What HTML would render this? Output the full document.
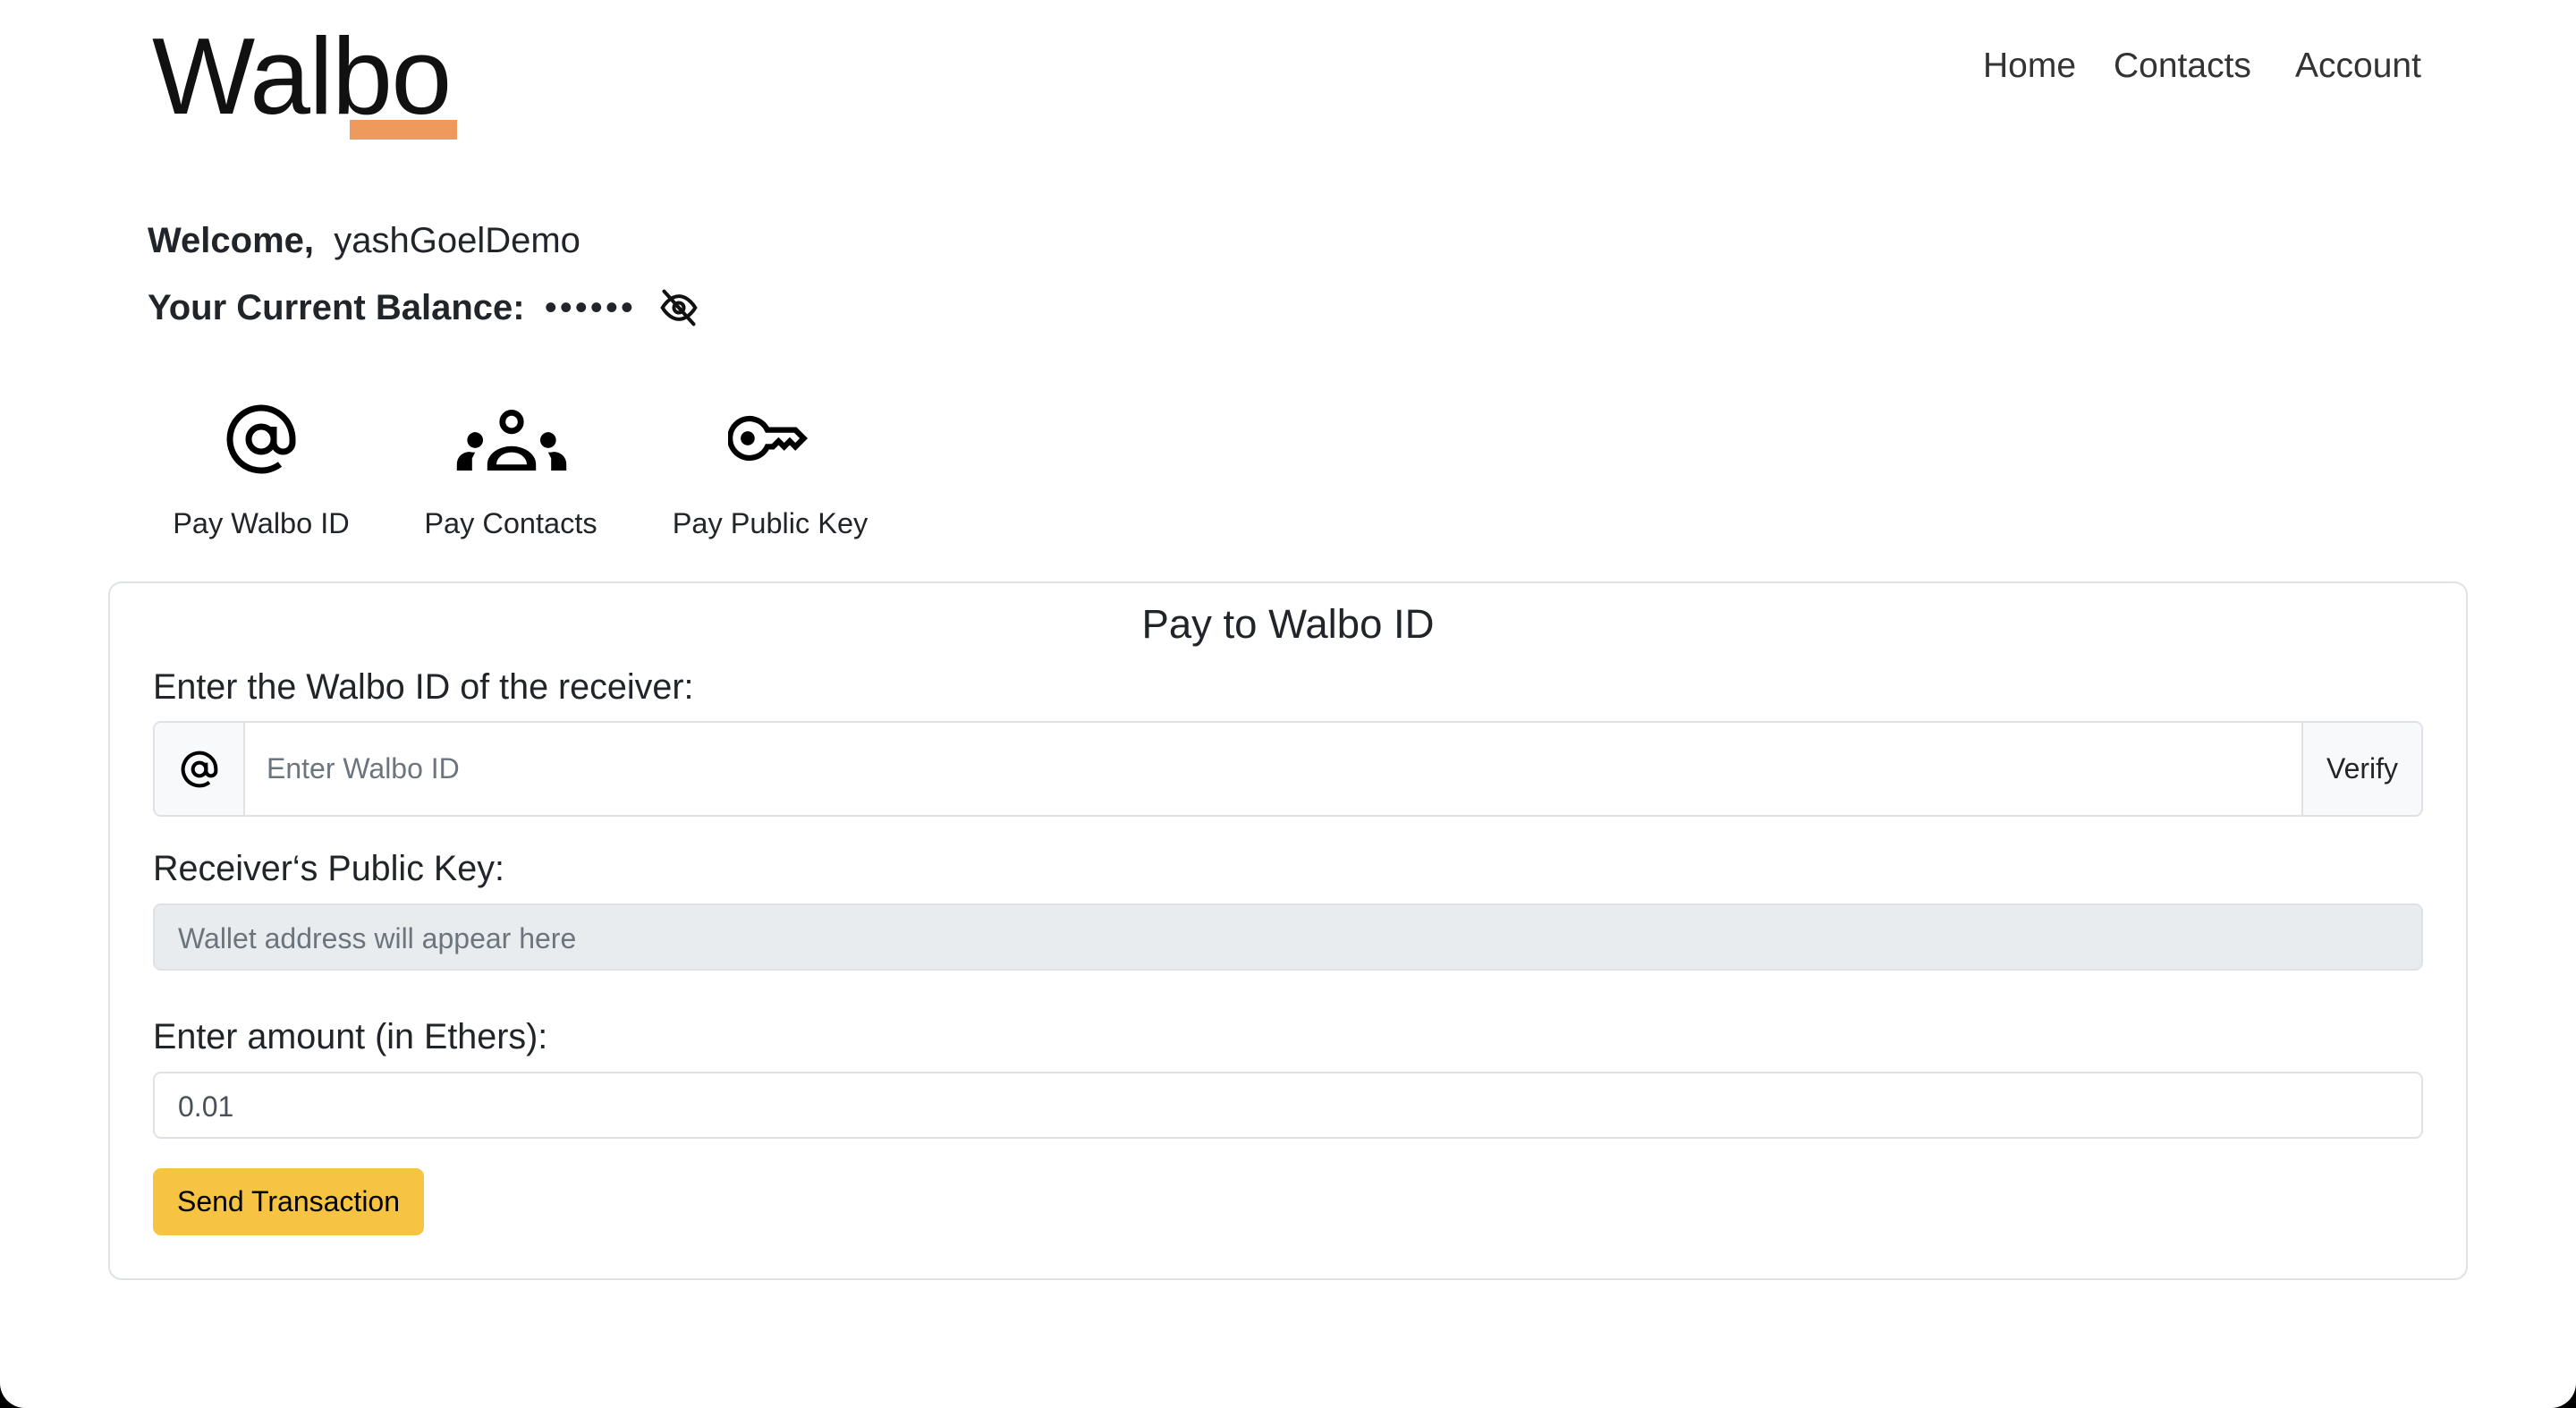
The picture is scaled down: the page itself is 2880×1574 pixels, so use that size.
<!DOCTYPE html>
<html><head><meta charset="utf-8"><style>
*{box-sizing:border-box;margin:0;padding:0}
html,body{width:2880px;height:1574px;background:#000;overflow:hidden;font-family:"Liberation Sans",sans-serif;color:#212529}
.page{position:absolute;left:0;top:0;width:2880px;height:1574px;background:#fff;border-radius:0 0 28px 28px}
.a{position:absolute;white-space:nowrap}
.logo{left:170px;top:24px;font-size:122px;font-weight:400;letter-spacing:-1.5px;color:#111;line-height:1}
.bar{left:391px;top:134px;width:120px;height:22px;background:#ef9a5c}
.nav{top:54px;font-size:39px;color:#333;line-height:1}
.big{font-size:40px;line-height:1}
.lbl{font-size:32.5px;line-height:1;transform:translateX(-50%)}
.card{left:121px;top:650px;width:2638px;height:781px;border:2px solid #dee2e6;border-radius:15px}
.fl{left:171px;font-size:39.5px;line-height:1}
.in{left:171px;width:2538px;border:2px solid #dee2e6;border-radius:9px;font-size:32px;color:#6c757d}
</style></head><body><div class="page"></div>
<div class="a logo">Walbo</div>
<div class="a bar"></div>
<div class="a nav" style="left:2217px">Home</div>
<div class="a nav" style="left:2363px">Contacts</div>
<div class="a nav" style="left:2566px">Account</div>

<div class="a big" style="left:165px;top:249px"><b>Welcome,</b>&nbsp;&nbsp;yashGoelDemo</div>
<div class="a big" style="left:165px;top:324px"><b>Your Current Balance:</b>&nbsp;&nbsp;<span style="letter-spacing:3px">••••••</span></div>
<svg class="a" style="left:736px;top:322px" width="46" height="44" viewBox="0 0 24 24" fill="none" stroke="#111" stroke-width="2.2" stroke-linecap="round"><path d="M2 12s4-7 10-7 10 7 10 7-4 7-10 7S2 12 2 12z"/><circle cx="12" cy="12" r="3"/><path d="M3 2l18 20"/></svg>

<svg class="a" style="left:250px;top:448px" width="84" height="86" viewBox="0 0 24 24" fill="none" stroke="#000" stroke-width="2"><circle cx="12" cy="12" r="4"/><path d="M16 8v5a3 3 0 0 0 6 0v-1a10 10 0 1 0-4 8"/></svg>
<svg class="a" style="left:510px;top:458px" width="124" height="68" viewBox="0 0 36 20" fill="#000"><circle cx="18" cy="4" r="3" fill="none" stroke="#000" stroke-width="2"/><path d="M10 20v-2a8 6 0 0 1 16 0v2z M13 18h10a5 4 0 0 0-10 0z" fill-rule="evenodd"/><circle cx="6" cy="10" r="2.6"/><circle cx="30" cy="10" r="2.6"/><path d="M0 20v-2a4 4 0 0 1 5-4l1 0-1 2v4z M36 20v-2a4 4 0 0 0-5-4l-1 0 1 2v4z"/></svg>
<svg class="a" style="left:814px;top:460px" width="94" height="60" viewBox="0 0 30 18" fill="none" stroke="#000" stroke-width="2"><path d="M14 6A7 7 0 1 0 14 12h2l2-2 2 2 2-2 2 2 3-3-3-3z"/><circle cx="7" cy="9" r="1.5" fill="#000"/></svg>

<div class="a lbl" style="left:292px;top:569px">Pay Walbo ID</div>
<div class="a lbl" style="left:571px;top:569px">Pay Contacts</div>
<div class="a lbl" style="left:861px;top:569px">Pay Public Key</div>

<div class="a card"></div>
<div class="a" style="left:0;width:2880px;text-align:center;top:675px;font-size:45.5px;line-height:1">Pay to Walbo ID</div>
<div class="a fl" style="top:749px">Enter the Walbo ID of the receiver:</div>
<div class="a in" style="top:806px;height:107px;display:flex;align-items:center">
  <div style="width:101px;height:100%;background:#f8f9fa;border-right:2px solid #dee2e6;display:flex;align-items:center;justify-content:center;border-radius:8px 0 0 8px">
    <svg width="44" height="44" viewBox="0 0 24 24" fill="none" stroke="#000" stroke-width="2.2"><circle cx="12" cy="12" r="4"/><path d="M16 8v5a3 3 0 0 0 6 0v-1a10 10 0 1 0-4 8"/></svg>
  </div>
  <div style="flex:1;padding-left:24px">Enter Walbo ID</div>
  <div style="width:134px;height:100%;background:#f8f9fa;border-left:2px solid #dee2e6;display:flex;align-items:center;justify-content:center;color:#212529;border-radius:0 8px 8px 0">Verify</div>
</div>
<div class="a fl" style="top:952px">Receiver‘s Public Key:</div>
<div class="a in" style="top:1010px;height:75px;background:#e9ecef;padding:21px 26px;line-height:1">Wallet address will appear here</div>
<div class="a fl" style="top:1140px">Enter amount (in Ethers):</div>
<div class="a in" style="top:1198px;height:75px;padding:21px 26px;line-height:1;color:#495057">0.01</div>
<div class="a" style="left:171px;top:1306px;width:303px;height:75px;background:#f6c343;border-radius:9px;font-size:32px;line-height:75px;text-align:center;color:#000">Send Transaction</div>
</body></html>
